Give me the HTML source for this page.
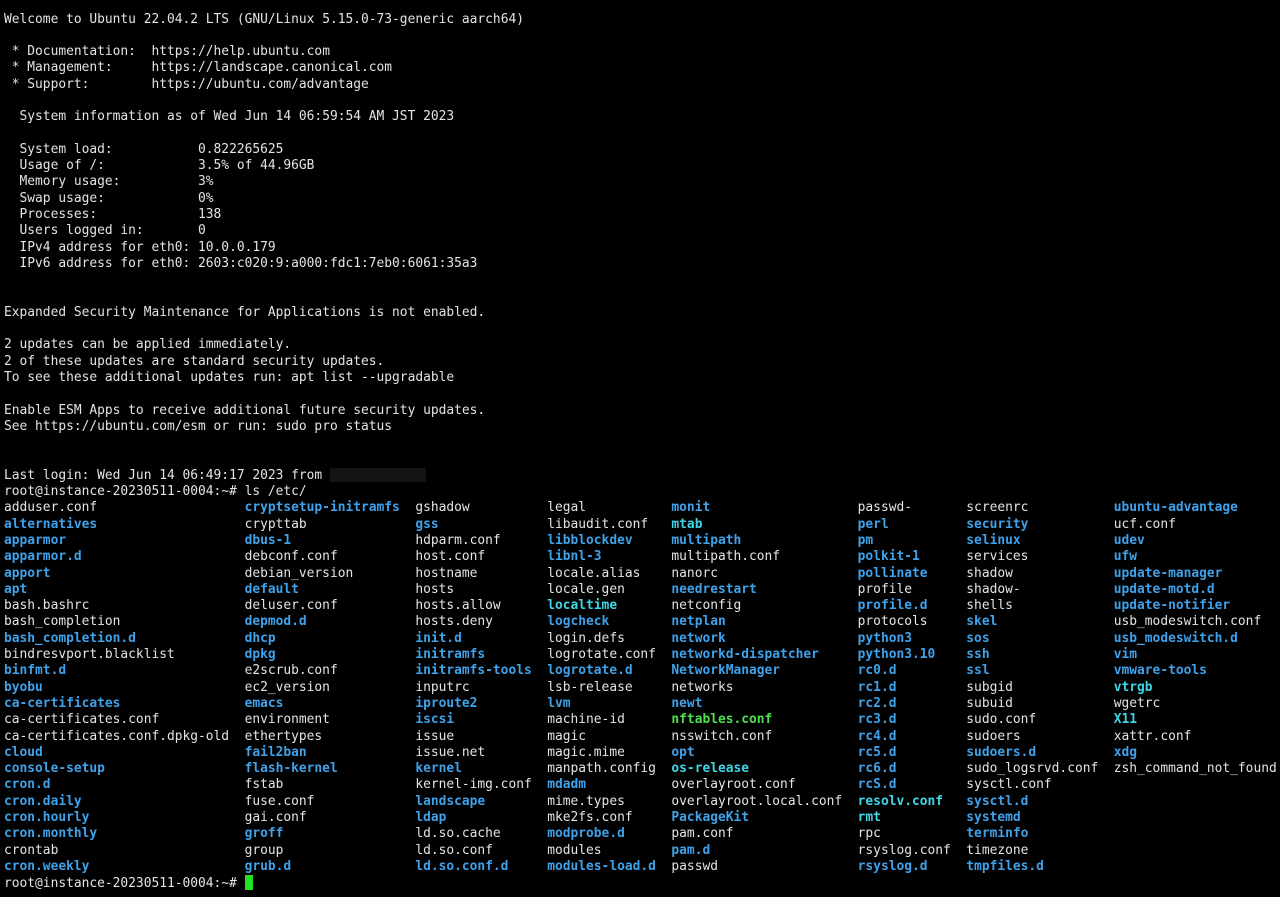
<!DOCTYPE html>
<html><head><meta charset="utf-8"><style>
html,body{margin:0;padding:0;background:#000;width:1280px;height:897px;overflow:hidden}
.t{position:absolute;left:4px;top:11.5px;font-family:"DejaVu Sans Mono","Liberation Mono",monospace;font-size:12.9px;line-height:16.3px;color:#e4e4e4;white-space:pre}
.r span{display:inline-block}
.a{width:31ch}.b{width:22ch}.c{width:17ch}.d{width:16ch}.e{width:24ch}.f{width:14ch}.g{width:19ch}
.B{color:#3fa2ea;font-weight:bold}.C{color:#3fd6e6;font-weight:bold}.G{color:#4fe04f;font-weight:bold}
.red{display:inline-block;width:96px;height:14px;background:#141414;vertical-align:middle}
.cur{display:inline-block;width:8px;height:15px;background:#22e022;vertical-align:-3px}
</style></head><body><div class="t">Welcome to Ubuntu 22.04.2 LTS (GNU/Linux 5.15.0-73-generic aarch64)

 * Documentation:  https://help.ubuntu.com
 * Management:     https://landscape.canonical.com
 * Support:        https://ubuntu.com/advantage

  System information as of Wed Jun 14 06:59:54 AM JST 2023

  System load:           0.822265625
  Usage of /:            3.5% of 44.96GB
  Memory usage:          3%
  Swap usage:            0%
  Processes:             138
  Users logged in:       0
  IPv4 address for eth0: 10.0.0.179
  IPv6 address for eth0: 2603:c020:9:a000:fdc1:7eb0:6061:35a3


Expanded Security Maintenance for Applications is not enabled.

2 updates can be applied immediately.
2 of these updates are standard security updates.
To see these additional updates run: apt list --upgradable

Enable ESM Apps to receive additional future security updates.
See https://ubuntu.com/esm or run: sudo pro status


Last login: Wed Jun 14 06:49:17 2023 from <span class="red"></span>
root@instance-20230511-0004:~# ls /etc/
<div class="r"><span class="a">adduser.conf</span><span class="b B">cryptsetup-initramfs</span><span class="c">gshadow</span><span class="d">legal</span><span class="e B">monit</span><span class="f">passwd-</span><span class="g">screenrc</span><span class="B">ubuntu-advantage</span></div><div class="r"><span class="a B">alternatives</span><span class="b">crypttab</span><span class="c B">gss</span><span class="d">libaudit.conf</span><span class="e C">mtab</span><span class="f B">perl</span><span class="g B">security</span><span>ucf.conf</span></div><div class="r"><span class="a B">apparmor</span><span class="b B">dbus-1</span><span class="c">hdparm.conf</span><span class="d B">libblockdev</span><span class="e B">multipath</span><span class="f B">pm</span><span class="g B">selinux</span><span class="B">udev</span></div><div class="r"><span class="a B">apparmor.d</span><span class="b">debconf.conf</span><span class="c">host.conf</span><span class="d B">libnl-3</span><span class="e">multipath.conf</span><span class="f B">polkit-1</span><span class="g">services</span><span class="B">ufw</span></div><div class="r"><span class="a B">apport</span><span class="b">debian_version</span><span class="c">hostname</span><span class="d">locale.alias</span><span class="e">nanorc</span><span class="f B">pollinate</span><span class="g">shadow</span><span class="B">update-manager</span></div><div class="r"><span class="a B">apt</span><span class="b B">default</span><span class="c">hosts</span><span class="d">locale.gen</span><span class="e B">needrestart</span><span class="f">profile</span><span class="g">shadow-</span><span class="B">update-motd.d</span></div><div class="r"><span class="a">bash.bashrc</span><span class="b">deluser.conf</span><span class="c">hosts.allow</span><span class="d C">localtime</span><span class="e">netconfig</span><span class="f B">profile.d</span><span class="g">shells</span><span class="B">update-notifier</span></div><div class="r"><span class="a">bash_completion</span><span class="b B">depmod.d</span><span class="c">hosts.deny</span><span class="d B">logcheck</span><span class="e B">netplan</span><span class="f">protocols</span><span class="g B">skel</span><span>usb_modeswitch.conf</span></div><div class="r"><span class="a B">bash_completion.d</span><span class="b B">dhcp</span><span class="c B">init.d</span><span class="d">login.defs</span><span class="e B">network</span><span class="f B">python3</span><span class="g B">sos</span><span class="B">usb_modeswitch.d</span></div><div class="r"><span class="a">bindresvport.blacklist</span><span class="b B">dpkg</span><span class="c B">initramfs</span><span class="d">logrotate.conf</span><span class="e B">networkd-dispatcher</span><span class="f B">python3.10</span><span class="g B">ssh</span><span class="B">vim</span></div><div class="r"><span class="a B">binfmt.d</span><span class="b">e2scrub.conf</span><span class="c B">initramfs-tools</span><span class="d B">logrotate.d</span><span class="e B">NetworkManager</span><span class="f B">rc0.d</span><span class="g B">ssl</span><span class="B">vmware-tools</span></div><div class="r"><span class="a B">byobu</span><span class="b">ec2_version</span><span class="c">inputrc</span><span class="d">lsb-release</span><span class="e">networks</span><span class="f B">rc1.d</span><span class="g">subgid</span><span class="C">vtrgb</span></div><div class="r"><span class="a B">ca-certificates</span><span class="b B">emacs</span><span class="c B">iproute2</span><span class="d B">lvm</span><span class="e B">newt</span><span class="f B">rc2.d</span><span class="g">subuid</span><span>wgetrc</span></div><div class="r"><span class="a">ca-certificates.conf</span><span class="b">environment</span><span class="c B">iscsi</span><span class="d">machine-id</span><span class="e G">nftables.conf</span><span class="f B">rc3.d</span><span class="g">sudo.conf</span><span class="C">X11</span></div><div class="r"><span class="a">ca-certificates.conf.dpkg-old</span><span class="b">ethertypes</span><span class="c">issue</span><span class="d">magic</span><span class="e">nsswitch.conf</span><span class="f B">rc4.d</span><span class="g">sudoers</span><span>xattr.conf</span></div><div class="r"><span class="a B">cloud</span><span class="b B">fail2ban</span><span class="c">issue.net</span><span class="d">magic.mime</span><span class="e B">opt</span><span class="f B">rc5.d</span><span class="g B">sudoers.d</span><span class="B">xdg</span></div><div class="r"><span class="a B">console-setup</span><span class="b B">flash-kernel</span><span class="c B">kernel</span><span class="d">manpath.config</span><span class="e C">os-release</span><span class="f B">rc6.d</span><span class="g">sudo_logsrvd.conf</span><span>zsh_command_not_found</span></div><div class="r"><span class="a B">cron.d</span><span class="b">fstab</span><span class="c">kernel-img.conf</span><span class="d B">mdadm</span><span class="e">overlayroot.conf</span><span class="f B">rcS.d</span><span class="g">sysctl.conf</span></div><div class="r"><span class="a B">cron.daily</span><span class="b">fuse.conf</span><span class="c B">landscape</span><span class="d">mime.types</span><span class="e">overlayroot.local.conf</span><span class="f C">resolv.conf</span><span class="g B">sysctl.d</span></div><div class="r"><span class="a B">cron.hourly</span><span class="b">gai.conf</span><span class="c B">ldap</span><span class="d">mke2fs.conf</span><span class="e B">PackageKit</span><span class="f C">rmt</span><span class="g B">systemd</span></div><div class="r"><span class="a B">cron.monthly</span><span class="b B">groff</span><span class="c">ld.so.cache</span><span class="d B">modprobe.d</span><span class="e">pam.conf</span><span class="f">rpc</span><span class="g B">terminfo</span></div><div class="r"><span class="a">crontab</span><span class="b">group</span><span class="c">ld.so.conf</span><span class="d">modules</span><span class="e B">pam.d</span><span class="f">rsyslog.conf</span><span class="g">timezone</span></div><div class="r"><span class="a B">cron.weekly</span><span class="b B">grub.d</span><span class="c B">ld.so.conf.d</span><span class="d B">modules-load.d</span><span class="e">passwd</span><span class="f B">rsyslog.d</span><span class="g B">tmpfiles.d</span></div>root@instance-20230511-0004:~# <span class="cur"></span></div></body></html>
